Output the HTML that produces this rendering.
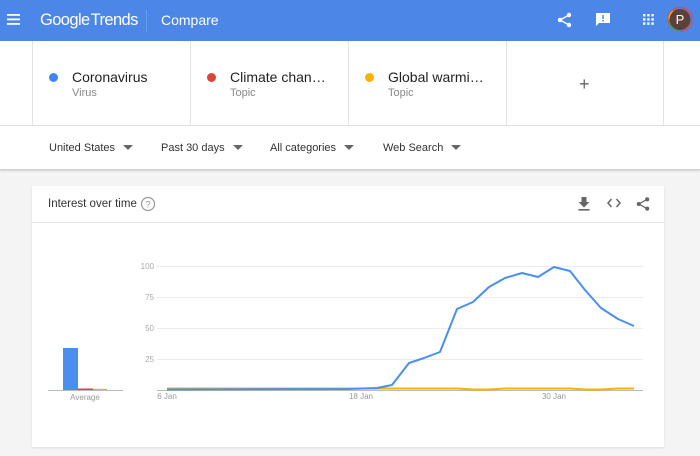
<!DOCTYPE html>
<html><head><meta charset="utf-8"><style>
*{margin:0;padding:0;box-sizing:border-box}
body{width:700px;height:456px;overflow:hidden;background:#f4f4f4;font-family:"Liberation Sans",Arial,sans-serif;position:relative}
.hdr{position:absolute;left:0;top:0;width:700px;height:41px;background:#4c87e8;color:#fff}
.terms{position:absolute;left:0;top:41px;width:700px;height:85px;background:#fff;border-bottom:1px solid #e0e0e0}
.cell{position:absolute;top:0;height:85px;border-left:1px solid #e3e3e3}
.dot{position:absolute;left:16px;top:32px;width:9px;height:9px;border-radius:50%}
.t1{position:absolute;left:39px;top:28px;font-size:14px;color:#222}
.t2{position:absolute;left:39px;top:46px;font-size:11px;color:#888}
.filters{position:absolute;left:0;top:126px;width:700px;height:44px;background:#fff;border-bottom:1px solid #d0d0d0;box-shadow:0 1px 2px rgba(0,0,0,.15)}
.f{position:absolute;top:16px;font-size:11px;color:#333}
.f:after{content:"";position:absolute;right:-18px;top:3px;border-left:5px solid transparent;border-right:5px solid transparent;border-top:5px solid #666}
.card{position:absolute;left:32px;top:186px;width:632px;height:261px;background:#fff;box-shadow:0 1px 2px rgba(0,0,0,.1)}
</style></head><body>
<div class="hdr">
<svg style="position:absolute;left:7px;top:14px" width="13" height="11"><rect y="0" width="13" height="1.8" fill="#fff"/><rect y="4.5" width="13" height="1.8" fill="#fff"/><rect y="9" width="13" height="1.8" fill="#fff"/></svg>
<div style="position:absolute;left:40px;top:11px;font-size:16.5px;letter-spacing:-0.6px">Google<span style="margin-left:1px">Trends</span></div>
<div style="position:absolute;left:146px;top:10px;width:1px;height:22px;background:#6b9cec"></div>
<div style="position:absolute;left:161px;top:12px;font-size:14px">Compare</div>
<svg style="position:absolute;left:557px;top:12px" width="15" height="16" viewBox="0 0 15 16"><circle cx="12" cy="3" r="2.2" fill="#fff"/><circle cx="3" cy="8" r="2.2" fill="#fff"/><circle cx="12" cy="13" r="2.2" fill="#fff"/><path d="M12 3L3 8L12 13" stroke="#fff" stroke-width="1.3" fill="none"/></svg>
<svg style="position:absolute;left:596px;top:13px" width="14" height="14" viewBox="0 0 14 14"><path d="M0 0H14V10H3L0 13Z" fill="#fff"/><rect x="6.3" y="2" width="1.5" height="4" fill="#4c87e8"/><rect x="6.3" y="7" width="1.5" height="1.5" fill="#4c87e8"/></svg>
<svg style="position:absolute;left:643px;top:14px" width="11" height="11"><g fill="#fff"><rect x="0" y="0" width="2.4" height="2.4"/><rect x="4.2" y="0" width="2.4" height="2.4"/><rect x="8.4" y="0" width="2.4" height="2.4"/><rect x="0" y="4.2" width="2.4" height="2.4"/><rect x="4.2" y="4.2" width="2.4" height="2.4"/><rect x="8.4" y="4.2" width="2.4" height="2.4"/><rect x="0" y="8.4" width="2.4" height="2.4"/><rect x="4.2" y="8.4" width="2.4" height="2.4"/><rect x="8.4" y="8.4" width="2.4" height="2.4"/></g></svg>
<svg style="position:absolute;left:667px;top:6px" width="26" height="27" viewBox="0 0 26 27"><circle cx="13" cy="13.5" r="12" fill="none" stroke="#e8453c" stroke-width="1.2"/><path d="M2 15A11 11 0 0 0 13 25.5" stroke="#34a853" stroke-width="1.3" fill="none"/><path d="M2 13A11 11 0 0 1 6 5" stroke="#fbbc05" stroke-width="1.3" fill="none"/><circle cx="13" cy="13.5" r="10.5" fill="#5d4037"/><text x="13" y="18" font-size="13" fill="#fff" text-anchor="middle" font-family="Liberation Sans">P</text></svg>
</div>
<div class="terms">
<div class="cell" style="left:32px;width:158px"><div class="dot" style="background:#4285f4"></div><div class="t1">Coronavirus</div><div class="t2">Virus</div></div>
<div class="cell" style="left:190px;width:158px"><div class="dot" style="background:#db4437"></div><div class="t1">Climate chan…</div><div class="t2">Topic</div></div>
<div class="cell" style="left:348px;width:158px"><div class="dot" style="background:#f4b400"></div><div class="t1">Global warmi…</div><div class="t2">Topic</div></div>
<div class="cell" style="left:506px;width:158px;border-right:1px solid #e3e3e3"><div style="position:absolute;left:72px;top:33px;font-size:18px;color:#666;font-weight:300">+</div></div>
</div>
<div class="filters">
<div class="f" style="left:49px">United States</div>
<div class="f" style="left:161px">Past 30 days</div>
<div class="f" style="left:270px">All categories</div>
<div class="f" style="left:383px">Web Search</div>
</div>
<div class="card">
<div style="position:absolute;left:16px;top:12px;font-size:11.5px;color:#333">Interest over time</div>
<svg style="position:absolute;left:108px;top:10px" width="16" height="16"><circle cx="8" cy="8" r="6.5" fill="none" stroke="#999" stroke-width="1.2"/><text x="8" y="11.5" font-size="9.5" fill="#999" text-anchor="middle" font-family="Liberation Sans">?</text></svg>
<svg style="position:absolute;left:546px;top:11px" width="12" height="14"><path d="M3.5 0H8.5V5H11.5L6 10.5L0.5 5H3.5Z" fill="#666"/><rect x="0.5" y="12" width="11" height="1.6" fill="#666"/></svg>
<svg style="position:absolute;left:575px;top:12px" width="14" height="10"><path d="M4.5 1L1 5L4.5 9M9.5 1L13 5L9.5 9" stroke="#666" stroke-width="1.5" fill="none"/></svg>
<svg style="position:absolute;left:604px;top:10px" width="14" height="16" viewBox="0 0 15 16"><circle cx="12" cy="3" r="2.2" fill="#666"/><circle cx="3" cy="8" r="2.2" fill="#666"/><circle cx="12" cy="13" r="2.2" fill="#666"/><path d="M12 3L3 8L12 13" stroke="#666" stroke-width="1.3" fill="none"/></svg>
<div style="position:absolute;left:0;top:36px;width:632px;height:1px;background:#e5e5e5"></div>
</div>
<svg style="position:absolute;left:0;top:0" width="700" height="456" font-family="Liberation Sans">
<g stroke="#ececec" stroke-width="1"><line x1="157" y1="266.5" x2="643" y2="266.5"/><line x1="157" y1="297.5" x2="643" y2="297.5"/><line x1="157" y1="328.5" x2="643" y2="328.5"/><line x1="157" y1="359.5" x2="643" y2="359.5"/></g>
<g font-size="8" fill="#aaa" text-anchor="end"><text x="154" y="269">100</text><text x="154" y="300">75</text><text x="154" y="331">50</text><text x="154" y="362">25</text></g>
<line x1="157" y1="390.5" x2="643" y2="390.5" stroke="#bbb"/>
<line x1="48" y1="390.5" x2="123" y2="390.5" stroke="#bbb"/>
<rect x="63" y="348" width="15" height="42" fill="#4c8df0"/>
<rect x="78" y="388.5" width="15" height="1.5" fill="#db4437"/><rect x="93" y="388.8" width="14" height="1.2" fill="#f4b400"/>
<g font-size="8" fill="#999" text-anchor="middle"><text x="85" y="400">Average</text><text x="167" y="399">6 Jan</text><text x="361" y="399">18 Jan</text><text x="554" y="399">30 Jan</text></g>
<polyline fill="none" stroke="#f4b400" stroke-width="2" points="167,388.5 348,388.5 392,388.5 457,388.5 473,389.5 489,389.5 505,388.5 570,388.5 585,389.5 601,389.5 618,388.5 634,388.5"/>
<polyline fill="none" stroke="#4a8ff0" stroke-width="2" stroke-linejoin="round" points="167,389.5 348,389 377,388 392,385 409,363 424,358 440,352 457,309 473,302 489,287 505,278 522,273 538,277 554,267 570,271 585,290 601,308 618,319 634,326"/>
</svg>
</body></html>
